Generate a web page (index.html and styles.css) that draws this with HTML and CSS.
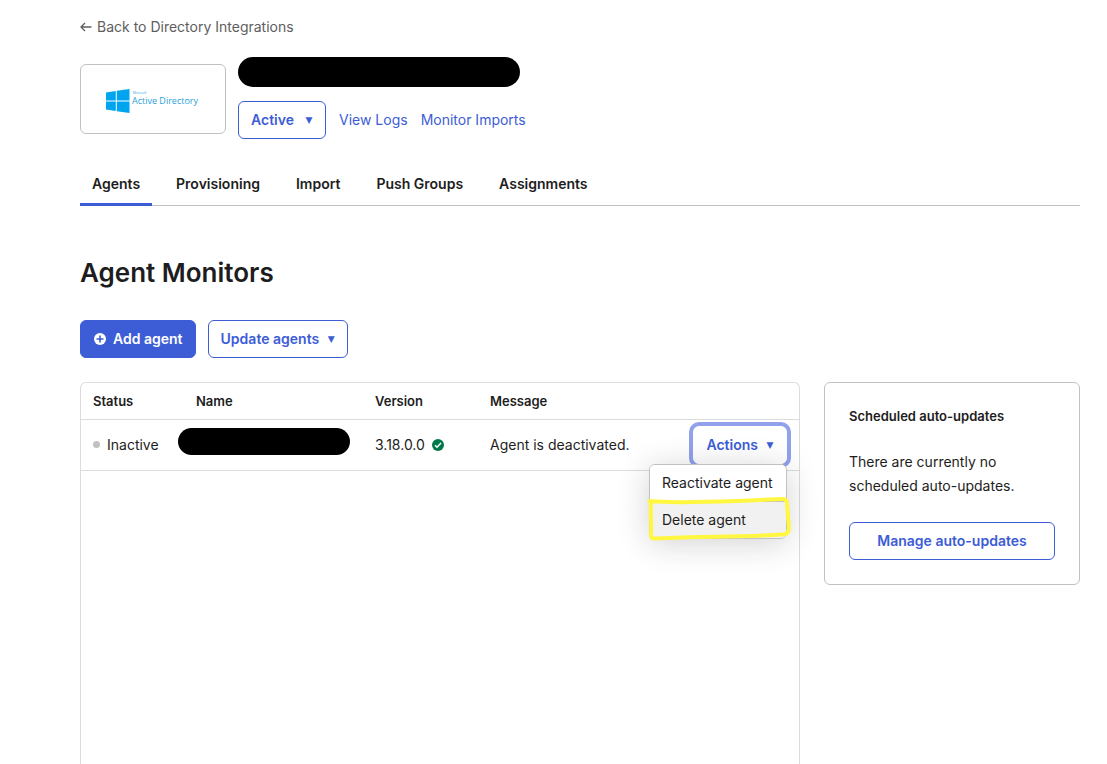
FILE: index.html
```html
<!DOCTYPE html>
<html lang="en">
<head>
<meta charset="utf-8">
<meta name="viewport" content="width=device-width, initial-scale=1">
<title>Agent Monitors</title>
<link rel="stylesheet" href="styles.css">
</head>
<body>
<div class="page">
  <a class="back" href="#">
    <svg class="back-icon" viewBox="0 0 12 12" aria-hidden="true"><path d="M11.5 6H1.5M5 2 1 6l4 4"/></svg>
    <span>Back to Directory Integrations</span>
  </a>

  <header class="app">
    <div class="app-logo">
      <svg class="logo" viewBox="0 0 96 24" role="img" aria-label="Microsoft Active Directory">
        <path fill="#00a4ef" d="M0 3.4 9.8 2v9.5H0zM10.8 1.8 23.5 0v11.5H10.8zM0 12.5h9.8V22L0 20.6zM10.8 12.5h12.7V24l-12.7-1.8z"/>
        <text class="logo-small" x="27" y="5">Microsoft</text>
        <text class="logo-name" x="26" y="15">Active Directory</text>
      </svg>
    </div>
    <div class="app-info">
      <div class="redacted redacted-title"></div>
      <div class="app-links">
        <button class="btn btn-status" type="button">Active <span class="caret">▼</span></button>
        <a class="link" href="#">View Logs</a>
        <a class="link" href="#">Monitor Imports</a>
      </div>
    </div>
  </header>

  <nav class="tabs">
    <a class="tab tab-active" href="#">Agents</a>
    <a class="tab" href="#">Provisioning</a>
    <a class="tab" href="#">Import</a>
    <a class="tab" href="#">Push Groups</a>
    <a class="tab" href="#">Assignments</a>
  </nav>

  <h1 class="title">Agent Monitors</h1>

  <div class="toolbar">
    <button class="btn btn-primary" type="button">
      <svg class="plus" viewBox="0 0 12 12" aria-hidden="true"><circle cx="6" cy="6" r="6" fill="#fff"/><path d="M6 2.500v7M2.500 6h7" stroke="#3c5dd6" stroke-width="1.600"/></svg>
      Add agent
    </button>
    <button class="btn" type="button">Update agents <span class="caret">▼</span></button>
  </div>

  <main class="content">
    <section class="panel">
      <table class="agents">
        <colgroup><col class="col-status"><col class="col-name"><col class="col-version"><col><col class="col-actions"></colgroup>
        <thead>
          <tr><th>Status</th><th>Name</th><th>Version</th><th>Message</th><th></th></tr>
        </thead>
        <tbody>
          <tr>
            <td><span class="status"><span class="dot"></span>Inactive</span></td>
            <td><div class="redacted redacted-name"></div></td>
            <td><span class="version">3.18.0.0
              <svg class="check" viewBox="0 0 12 12" role="img" aria-label="Up to date"><circle cx="6" cy="6" r="6" fill="#00784a"/><path d="m3 6.200 2 2 4-4.200" fill="none" stroke="#fff" stroke-width="1.500"/></svg></span></td>
            <td>Agent is deactivated.</td>
            <td class="cell-actions">
              <div class="dropdown">
                <button class="btn btn-actions" type="button" aria-expanded="true">Actions <span class="caret">▼</span></button>
                <div class="menu">
                  <button class="menu-item" type="button">Reactivate agent</button>
                  <button class="menu-item menu-item-hover" type="button">Delete agent</button>
                  <svg class="marker" viewBox="0 0 144 46" aria-hidden="true"><path d="M2.500 4C20 6 60 5 90 4S125 2 136 2Q140 2 140 7L142 31Q142 37 136 37.500C105 39.500 80 39.500 50 40L7 41.500Q4 41.500 4 38C5 28 3 18 4 5"/></svg>
                </div>
              </div>
            </td>
          </tr>
        </tbody>
      </table>
    </section>

    <aside class="card">
      <h2 class="card-title">Scheduled auto-updates</h2>
      <p class="card-text">There are currently no scheduled auto-updates.</p>
      <button class="btn btn-wide" type="button">Manage auto-updates</button>
    </aside>
  </main>
</div>
</body>
</html>
```
FILE: styles.css
```css
* { box-sizing: border-box; }

html, body { height: 100%; }

body {
  margin: 0;
  overflow: hidden;
  background: #fff;
  color: #1d1d21;
  font: 14px/24px Inter, "Liberation Sans", sans-serif;
}

.page {
  display: flex;
  flex-direction: column;
  min-height: 100%;
  padding: 15px 27px 0 80px;
}

.back {
  display: flex;
  align-items: center;
  align-self: flex-start;
  gap: 5px;
  color: #5e5e5e;
  text-decoration: none;
}

.back-icon {
  width: 12px;
  height: 12px;
  fill: none;
  stroke: currentColor;
  stroke-width: 1.3;
}

.app {
  display: flex;
  gap: 12px;
  margin-top: 18px;
}

.app-logo {
  display: flex;
  align-items: center;
  justify-content: center;
  width: 146px;
  height: 70px;
  margin-top: 7px;
  padding: 4px 0 0 2px;
  border: 1px solid #c1c1c1;
  border-radius: 6px;
}

.logo {
  width: 96px;
  height: 24px;
  overflow: visible;
}

.logo text {
  font-family: "Open Sans", sans-serif;
  fill: #2a9fdb;
}

.logo .logo-small { font-size: 3px; }
.logo .logo-name { font-size: 9px; }

.redacted { background: #000; }

.redacted-title {
  width: 282px;
  height: 30px;
  border-radius: 15px;
}

.app-links {
  display: flex;
  align-items: center;
  gap: 13px;
  margin-top: 14px;
}

.link {
  color: #3c5dd6;
  text-decoration: none;
}

.btn {
  display: inline-flex;
  align-items: center;
  justify-content: center;
  gap: 8px;
  height: 38px;
  padding: 0 12px;
  border: 1px solid #3c5dd6;
  border-radius: 6px;
  background: #fff;
  color: #3c5dd6;
  font: 600 14px/20px Inter, "Liberation Sans", sans-serif;
  white-space: nowrap;
}

.btn-primary {
  gap: 7px;
  padding: 0 12px 0 13px;
  background: #3c5dd6;
  color: #fff;
}

.btn-status { gap: 11px; }

.plus { width: 12px; height: 12px; }

.caret {
  width: 8px;
  font: 9px/12px "DejaVu Sans", sans-serif;
}

.tabs {
  display: flex;
  gap: 12px;
  margin-top: 24px;
  border-bottom: 1px solid #c1c1c1;
}

.tab {
  height: 43px;
  margin-bottom: -1px;
  padding: 9px 12px 0;
  color: #1d1d21;
  font-weight: 600;
  text-decoration: none;
}

.tab-active { border-bottom: 3px solid #3c5dd6; }

.title {
  margin: 51px 0 0;
  font-size: 26px;
  font-weight: 600;
  line-height: 32px;
}

.toolbar {
  display: flex;
  gap: 12px;
  margin-top: 31px;
}

.content {
  display: flex;
  flex: 1;
  align-items: flex-start;
  gap: 24px;
  margin-top: 24px;
}

.panel {
  flex: 1;
  align-self: stretch;
  border: 1px solid #dcdcdc;
  border-bottom: 0;
  border-radius: 6px 6px 0 0;
}

.agents {
  width: 100%;
  border-collapse: collapse;
  table-layout: fixed;
}

.col-status { width: 103px; }
.col-name { width: 179px; }
.col-version { width: 115px; }
.col-actions { width: 120px; }

.agents th,
.agents td {
  padding: 0 12px;
  border-bottom: 1px solid #dcdcdc;
  text-align: left;
  white-space: nowrap;
}

.agents th {
  height: 36px;
  font-size: 13px;
  font-weight: 600;
}

.agents td { height: 51px; }

.status,
.version {
  display: flex;
  align-items: center;
  gap: 7px;
}

.dot {
  width: 7px;
  height: 7px;
  border-radius: 50%;
  background: #c1c1c1;
}

.check { width: 12px; height: 12px; }

.redacted-name {
  width: 172px;
  height: 27px;
  margin: -6px 0 0 -18px;
  border-radius: 14px;
}

.agents .cell-actions { text-align: right; }

.dropdown {
  position: relative;
  display: inline-flex;
  vertical-align: middle;
}

.btn-actions {
  border-color: #fff;
  box-shadow: 0 0 0 4px #91a1ec;
}

.menu {
  position: absolute;
  top: 100%;
  right: 0;
  z-index: 1;
  width: 138px;
  border: 1px solid #c1c1c1;
  border-radius: 6px;
  background: #fff;
  box-shadow: 0 4px 32px rgba(29, 29, 33, 0.2);
}

.menu-item {
  display: block;
  width: 100%;
  height: 36px;
  padding: 0 12px;
  border: 0;
  border-radius: 5px 5px 0 0;
  background: #fff;
  color: #1d1d21;
  font: 14px/24px Inter, "Liberation Sans", sans-serif;
  text-align: left;
  white-space: nowrap;
}

.menu-item-hover {
  height: 37px;
  border-top: 1px solid #c1c1c1;
  border-radius: 0 0 5px 5px;
  background: #f1f1f1;
}

.marker {
  position: absolute;
  right: -5px;
  bottom: -5px;
  width: 144px;
  height: 46px;
  fill: none;
  stroke: #fff740;
  stroke-width: 4;
  stroke-linejoin: round;
  stroke-linecap: round;
  pointer-events: none;
}

.card {
  width: 256px;
  padding: 23px 24px 24px;
  border: 1px solid #c1c1c1;
  border-radius: 6px;
}

.card-title {
  margin: 0;
  font-size: 13px;
  font-weight: 600;
  line-height: 20px;
}

.card-text { margin: 24px 0; }

.btn-wide { width: 100%; }
```
